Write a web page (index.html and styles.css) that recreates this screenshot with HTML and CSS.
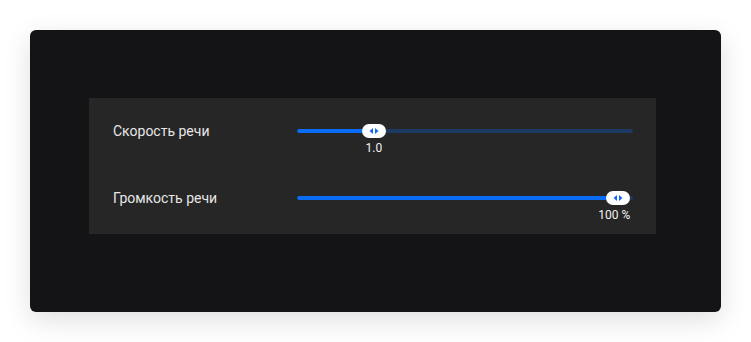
FILE: index.html
```html
<!DOCTYPE html>
<html lang="ru">
<head>
<meta charset="utf-8">
<link rel="stylesheet" href="styles.css">
</head>
<body>
<div class="card">
  <div class="panel">
    <div class="row">
      <div class="label">Скорость речи</div>
      <div class="slider">
        <div class="track"><div class="fill" style="width: 22.9%"></div></div>
        <div class="thumb" style="left: 22.9%">
          <svg width="24" height="14" viewBox="0 0 24 14"><rect x="0" y="0" width="24" height="14" rx="7" fill="#fff"/><path d="M11 4 L11 10 L7.5 7 Z" fill="#1368f0"/><path d="M13 4 L13 10 L16.5 7 Z" fill="#1368f0"/></svg>
        </div>
        <div class="value" style="left: 22.9%">1.0</div>
      </div>
    </div>
    <div class="row">
      <div class="label">Громкость речи</div>
      <div class="slider">
        <div class="track"><div class="fill" style="width: 95.5%"></div></div>
        <div class="thumb" style="left: 95.5%">
          <svg width="24" height="14" viewBox="0 0 24 14"><rect x="0" y="0" width="24" height="14" rx="7" fill="#fff"/><path d="M11 4 L11 10 L7.5 7 Z" fill="#1368f0"/><path d="M13 4 L13 10 L16.5 7 Z" fill="#1368f0"/></svg>
        </div>
        <div class="value" style="left: 94.4%">100 %</div>
      </div>
    </div>
  </div>
</div>
</body>
</html>
```
FILE: styles.css
```css
html, body {
  margin: 0;
  padding: 0;
  background: #ffffff;
}
body {
  padding: 30px 30px;
  font-family: Roboto, "Noto Sans", "Liberation Sans", sans-serif;
}
.card {
  width: 691px;
  height: 282px;
  box-sizing: border-box;
  background: #141416;
  border-radius: 6px;
  box-shadow: 0 8px 28px rgba(0, 0, 0, 0.13);
  padding: 68px 65px 0 59px;
}
.panel {
  background: #262626;
  height: 136px;
  box-sizing: border-box;
  padding: 26px 23px 0 24px;
  display: flex;
  flex-direction: column;
  gap: 39px;
}
.row {
  display: grid;
  grid-template-columns: 184px 1fr;
  align-items: start;
}
.label {
  color: #e6e6e6;
  font-size: 14px;
  line-height: 14px;
}
.slider {
  position: relative;
  height: 28px;
}
.track {
  margin-top: 5px;
  height: 4px;
  border-radius: 2px;
  background: #1d3a63;
  overflow: hidden;
}
.fill {
  height: 100%;
  background: #0a6cf5;
  border-radius: 2px;
}
.thumb {
  position: absolute;
  top: 0;
  width: 24px;
  height: 14px;
  transform: translateX(-12px);
}
.thumb svg {
  display: block;
}
.value {
  position: absolute;
  top: 18px;
  transform: translateX(-50%);
  color: #f2f2f2;
  font-size: 12px;
  line-height: 12px;
  white-space: nowrap;
}
```
